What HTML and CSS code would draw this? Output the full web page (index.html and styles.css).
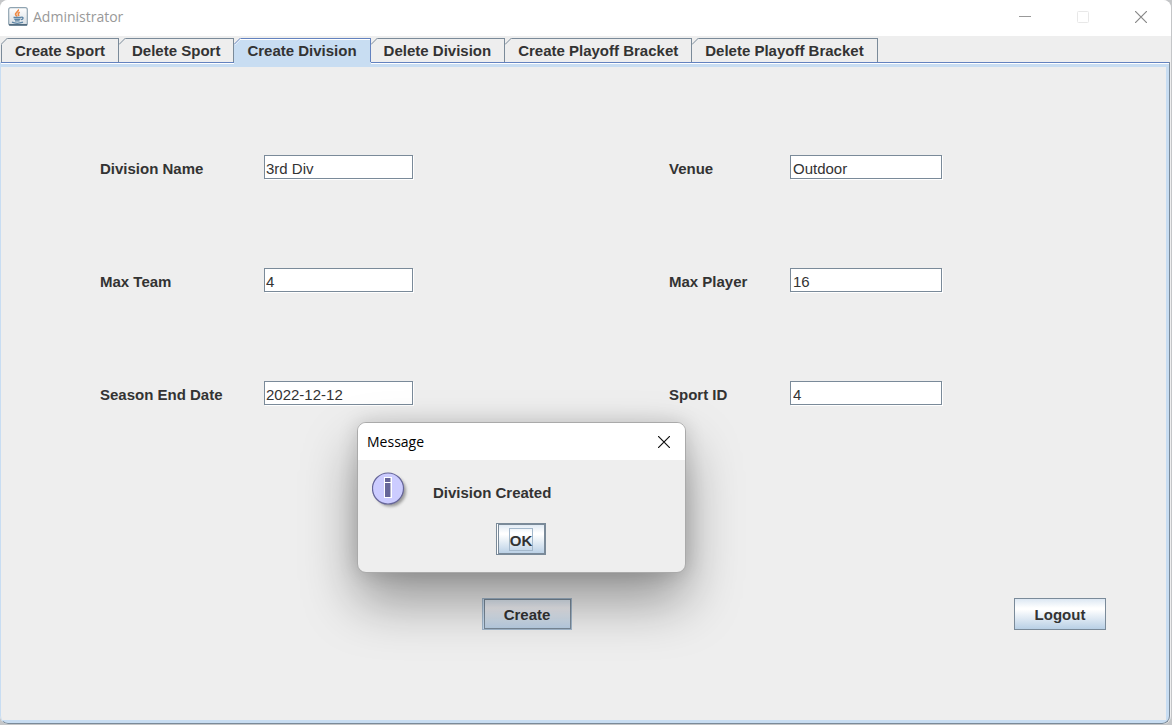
FILE: index.html
```html
<!DOCTYPE html>
<html lang="en">
<head>
<meta charset="utf-8">
<title>Administrator</title>
<link rel="stylesheet" href="styles.css">
</head>
<body>
<main class="window">
  <header class="titlebar">
    <svg class="app-icon" width="20" height="20" viewBox="0 0 20 20" aria-hidden="true">
      <defs><linearGradient id="tile" x1="0" y1="0" x2="0" y2="1"><stop offset="0" stop-color="#fff"/><stop offset="1" stop-color="#d5dce2"/></linearGradient></defs>
      <rect x=".7" y=".7" width="18.6" height="17.8" rx="2" fill="url(#tile)" stroke="#8fa3b1" stroke-width="1.2"/>
      <path d="M1 17.800h18" stroke="#526c80" stroke-width="1.400"/>
      <path d="M10.200 2.500c1.200 2-3.600 3.200-2.600 5.200.4.800 1.200 1 1.500 1.800M11.800 5.200c-2.400 1.200-1.700 2-.9 3.800" fill="none" stroke="#ee8a45" stroke-width="1.700"/>
      <path d="M5.500 10.500h7.500M6.300 12.300h6M7 13.800h4.600M4 15.200c3 1.300 8 1.100 11 0M13 10.300c3-.8 2.500 2.200 0 2.400" fill="none" stroke="#5d85a5" stroke-width="1.300"/>
    </svg>
    <h1 class="title">Administrator</h1>
    <div class="controls">
      <button class="control" aria-label="Minimize"><svg width="12" height="12" viewBox="0 0 12 12"><path d="M0 5.500h12" stroke="#999"/></svg></button>
      <button class="control" aria-label="Maximize" disabled><svg width="12" height="12" viewBox="0 0 12 12"><rect x=".5" y=".5" width="11" height="11" rx="1" fill="none" stroke="#e8e8e8"/></svg></button>
      <button class="control" aria-label="Close"><svg width="12" height="12" viewBox="0 0 12 12"><path d="M0 0l12 12M12 0L0 12" stroke="#888" stroke-width="1.200"/></svg></button>
    </div>
  </header>

  <nav class="tabs" role="tablist">
    <button class="tab" role="tab"><svg class="notch" viewBox="0 0 7 7"><path class="cut" d="M0 0h7L0 7z"/><path class="edge" d="M0 6.500L6.500 0"/></svg>Create Sport</button>
    <button class="tab" role="tab"><svg class="notch" viewBox="0 0 7 7"><path class="cut" d="M0 0h7L0 7z"/><path class="edge" d="M0 6.500L6.500 0"/></svg>Delete Sport</button>
    <button class="tab selected" role="tab" aria-selected="true"><svg class="notch" viewBox="0 0 7 7"><path class="cut" d="M0 0h7L0 7z"/><path class="shine" d="M0 7.500L7.500 0"/><path class="edge" d="M0 6.500L6.500 0"/></svg>Create Division</button>
    <button class="tab" role="tab"><svg class="notch" viewBox="0 0 7 7"><path class="cut" d="M0 0h7L0 7z"/><path class="edge" d="M0 6.500L6.500 0"/></svg>Delete Division</button>
    <button class="tab" role="tab"><svg class="notch" viewBox="0 0 7 7"><path class="cut" d="M0 0h7L0 7z"/><path class="edge" d="M0 6.500L6.500 0"/></svg>Create Playoff Bracket</button>
    <button class="tab" role="tab"><svg class="notch" viewBox="0 0 7 7"><path class="cut" d="M0 0h7L0 7z"/><path class="edge" d="M0 6.500L6.500 0"/></svg>Delete Playoff Bracket</button>
  </nav>

  <form class="panel">
    <div class="fields">
      <label for="name">Division Name</label>
      <input class="field" id="name" type="text" value="3rd Div">
      <label class="second" for="venue">Venue</label>
      <input class="field" id="venue" type="text" value="Outdoor">
      <label for="team">Max Team</label>
      <input class="field" id="team" type="text" value="4">
      <label class="second" for="player">Max Player</label>
      <input class="field" id="player" type="text" value="16">
      <label for="date">Season End Date</label>
      <input class="field" id="date" type="text" value="2022-12-12">
      <label class="second" for="sport">Sport ID</label>
      <input class="field" id="sport" type="text" value="4">
    </div>
    <div class="actions">
      <button class="button create" type="button">Create</button>
      <button class="button logout" type="button">Logout</button>
    </div>
  </form>
</main>

<section class="dialog" role="dialog" aria-labelledby="dialog-title">
  <header class="dialog-bar">
    <h2 class="dialog-title" id="dialog-title">Message</h2>
    <button class="dialog-close" aria-label="Close"><svg width="12" height="12" viewBox="0 0 12 12"><path d="M0 0l12 12M12 0L0 12" stroke="#111" stroke-width="1.200"/></svg></button>
  </header>
  <div class="dialog-body">
    <svg class="info" width="40" height="40" viewBox="0 0 40 40" aria-hidden="true">
      <defs><filter id="soft" x="-20%" y="-20%" width="140%" height="140%"><feGaussianBlur stdDeviation="1.500"/></filter></defs>
      <circle cx="18.500" cy="20" r="15.500" fill="#999" filter="url(#soft)"/>
      <circle cx="16" cy="17.500" r="15.500" fill="#ccccff" stroke="#666699" stroke-width="1.200"/>
      <path d="M12 6h8v21h-8z" fill="#fff"/>
      <path d="M13 7h5.500v4H13zM13 12h5.500v14H13z" fill="#666699"/>
    </svg>
    <p class="message">Division Created</p>
    <button class="button ok" type="button"><span class="focus">OK</span></button>
  </div>
</section>
</body>
</html>
```
FILE: styles.css
```css
* { box-sizing: border-box; }

body {
  margin: 0;
  padding: 0 1px 1px 0;
  min-height: 100vh;
  display: flex;
  background: #c4c6c8;
  color: #333;
  font: bold 15px/18px "Liberation Sans", Arial, sans-serif;
}

button, input { font: inherit; color: inherit; }

button { padding: 0; border: 0; background: none; }

.window {
  flex: 1;
  display: flex;
  flex-direction: column;
  background: #eee;
  border-radius: 8px;
  overflow: hidden;
}

.titlebar {
  display: flex;
  align-items: center;
  height: 36px;
  padding: 0 24px 2px 8px;
  background: #fff;
}

.title {
  flex: 1;
  margin: 0 0 0 5px;
  color: #999;
  font: 14px/20px "Open Sans", "Segoe UI", sans-serif;
}

.controls { display: flex; gap: 46px; }

.control { display: flex; }

.tabs {
  display: flex;
  align-items: flex-end;
  height: 26px;
  padding-left: 1px;
}

.tab {
  position: relative;
  height: 24px;
  padding: 0 13px;
  border-top: 1px solid #7a8a99;
  border-right: 1px solid #7a8a99;
  white-space: nowrap;
}

.tab:first-child { border-left: 1px solid #7a8a99; }

.tab.selected {
  z-index: 1;
  background: #c8ddf2;
  border-color: #6382bf;
  box-shadow: inset 0 1px #fff, 0 3px #c8ddf2;
}

.notch {
  position: absolute;
  top: -1px;
  left: 0;
  width: 7px;
  height: 7px;
}

.tab:first-child .notch { left: -1px; }

.cut { fill: #eee; }
.edge { fill: none; stroke: #7a8a99; }
.shine { fill: none; stroke: #fff; }
.selected .edge { stroke: #6382bf; }

.panel {
  flex: 1;
  display: flex;
  flex-direction: column;
  justify-content: space-between;
  margin-right: 1px;
  padding: 88px 63px 93px 99px;
  border: solid #7a8a99;
  border-width: 0 1px 1px;
  border-left-color: #c8ddf2;
  border-radius: 0 0 8px 8px;
  background:
    linear-gradient(#6382bf 1px, #fff 1px 2px, #c8ddf2 2px 5px) top / 100% 5px no-repeat,
    linear-gradient(#c8ddf2, #c8ddf2) right / 3px 100% no-repeat,
    linear-gradient(#c8ddf2, #c8ddf2) bottom / 100% 3px no-repeat,
    #eee;
}

.fields {
  display: grid;
  grid-template-columns: 164px 149px 1fr 152px;
  row-gap: 89px;
  margin: 5px 164px 0 0;
}

.fields label { padding-top: 5px; }

.second { justify-self: end; width: 121px; }

.field {
  width: 100%;
  height: 24px;
  padding: 2px 1px 0;
  border: 1px solid #7a8a99;
  border-radius: 0;
  background: #fff;
  box-shadow: 1px 1px #fff;
  font-weight: normal;
}

.second + .field { padding-left: 2px; }

.actions { display: flex; justify-content: space-between; padding-left: 382px; }

.button {
  height: 32px;
  padding-top: 2px;
  border: 1px solid #7a8a99;
  background: linear-gradient(#dde8f3, #fff 30%, #fff 35%, #b8cfe5);
}

.create {
  width: 90px;
  border-color: #a3b8cc;
  background: linear-gradient(#dde8f3, #f0f0f4 30%, #b8cfe5);
  box-shadow: inset 1px 0 #c8ddf2, inset 0 0 0 1px #7a8a99, inset 2px 0 #7a8a99;
}

.logout { width: 92px; }

/* Message box floating above the main window */
.dialog {
  position: absolute;
  z-index: 2;
  top: 422px;
  left: 357px;
  width: 329px;
  border: 1px solid #aaa;
  border-radius: 9px;
  overflow: hidden;
  background: #eee;
  box-shadow: 0 28px 54px rgba(0, 0, 0, .38), 0 0 20px rgba(0, 0, 0, .14);
}

.dialog-bar {
  display: flex;
  align-items: center;
  justify-content: space-between;
  height: 37px;
  padding: 0 15px 0 9px;
  background: #fff;
}

.dialog-title {
  margin: 0;
  color: #000;
  font: 14px/20px "Open Sans", "Segoe UI", sans-serif;
}

.dialog-close { display: flex; }

.dialog-body {
  display: grid;
  grid-template-columns: 61px 1fr;
  padding: 11px 15px 17px 14px;
}

.message { margin: 0; padding-top: 13px; }

.ok {
  grid-column: 1 / -1;
  justify-self: center;
  width: 50px;
  margin-top: 12px;
  padding: 0;
  box-shadow: inset 1px 0 #fff, inset -1px -1px #7a8a99, inset 2px 1px #7a8a99;
}

.focus {
  display: inline-block;
  padding-top: 3px;
  border: 1px solid #a3b8cc;
}
```
